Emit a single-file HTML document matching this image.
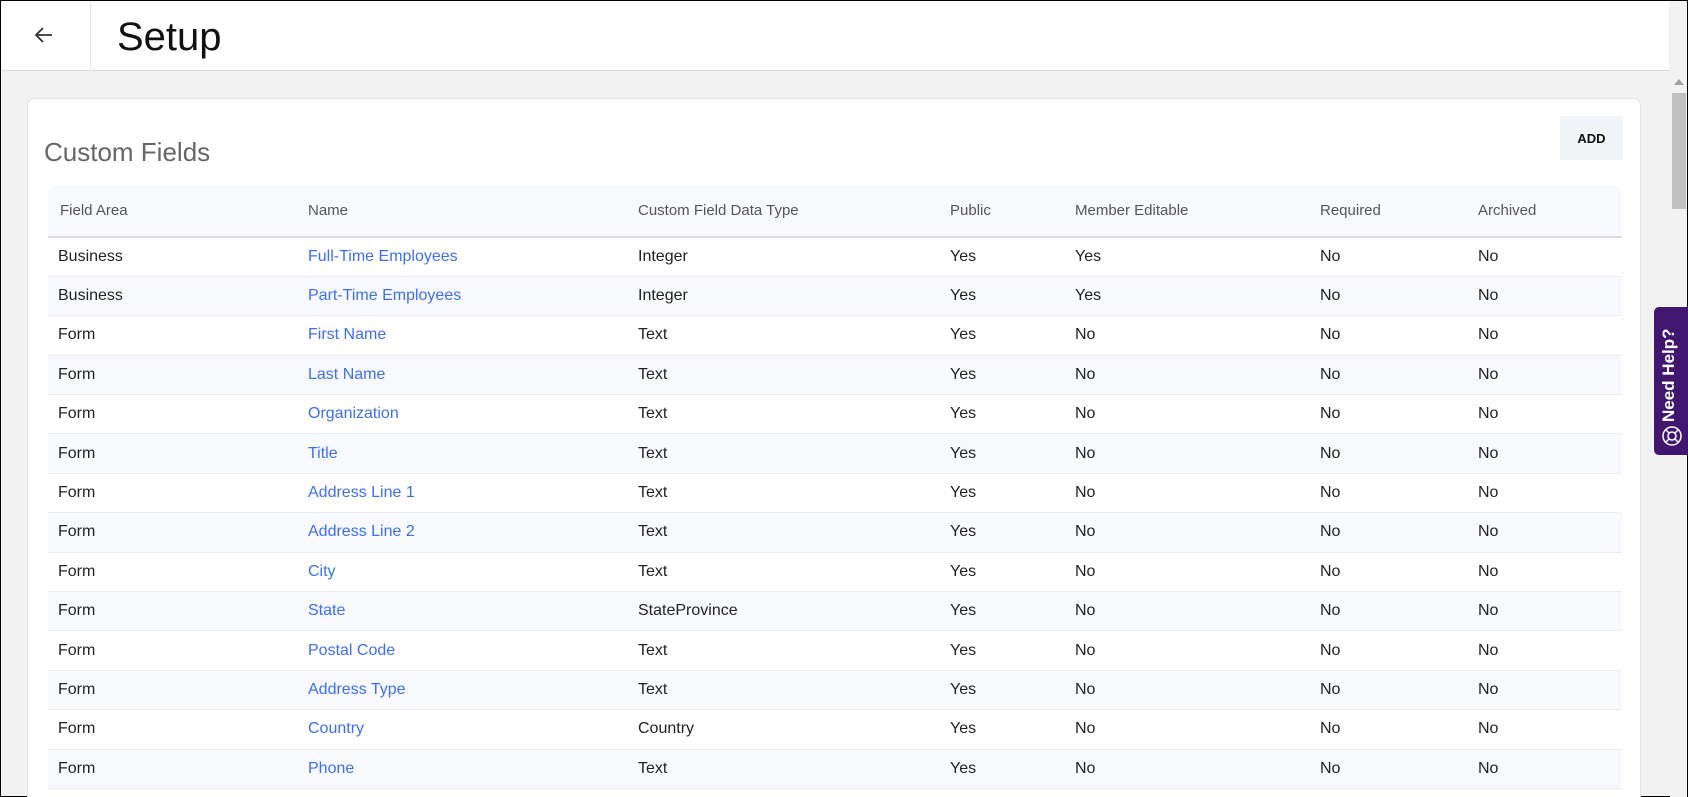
<!DOCTYPE html>
<html><head><meta charset="utf-8"><style>
*{box-sizing:border-box;margin:0;padding:0}
html,body{width:1688px;height:797px;overflow:hidden}
body{background:#f2f2f2;font-family:"Liberation Sans",sans-serif;color:#222;position:relative;border:1px solid #000}
.hdr{position:absolute;left:0;top:0;width:1668px;height:70px;background:#fff;border-bottom:1px solid #d6d6d6}
.div{position:absolute;left:89px;top:0;width:1px;height:70px;background:#e8e8e8}
.title{position:absolute;left:116px;top:14px;font-size:40px;color:#111}
.card{position:absolute;left:26px;top:97px;width:1614px;height:720px;background:#fff;border:1px solid #e4e4e4;border-radius:8px}
.cf{position:absolute;left:16px;top:38px;font-size:26px;color:#666}
.add{position:absolute;left:1532px;top:17px;width:63px;height:44px;background:#f2f5f8;font-weight:bold;font-size:13px;display:flex;align-items:center;justify-content:center;color:#111}
table{position:absolute;left:20px;top:86px;width:1574px;border-collapse:collapse;font-size:16px}
thead tr{background:#f7f9fc;height:52px}
th{font-weight:normal;text-align:left;color:#555;font-size:15px;border-bottom:2px solid #dedede}
td{height:39.4px;border-bottom:1px solid #ececec}
tbody tr:nth-child(even){background:#f7f9fc}
th:first-child{border-top-left-radius:8px}
th:last-child{border-top-right-radius:8px}
a{color:#3f6ff0;text-decoration:none}
.sb{position:absolute;left:1669px;top:71px;width:17px;height:726px;background:#f2f2f2}
.thumb{position:absolute;left:1671px;top:92px;width:14px;height:116px;background:#c1c1c1}
.help{position:absolute;left:1653px;top:306px;width:35px;height:148px;background:#40166e;border-radius:5px 0 0 5px}
.help span{position:absolute;left:-40px;top:50px;transform:rotate(-90deg);color:#fff;font-weight:bold;font-size:17px;width:110px;white-space:nowrap}
</style></head><body>
<div class="hdr">
<svg style="position:absolute;left:33px;top:25px" width="20" height="18" viewBox="0 0 20 18"><path d="M18 9H3M9 2L2 9l7 7" fill="none" stroke="#333" stroke-width="1.8"/></svg>
<div class="div"></div>
<div class="title">Setup</div>
</div>
<div class="card">
<div class="cf">Custom Fields</div>
<div class="add">ADD</div>
<table>
<colgroup><col style="width:260px"><col style="width:330px"><col style="width:312px"><col style="width:125px"><col style="width:245px"><col style="width:158px"><col></colgroup>
<thead><tr><th style="padding-left:12px">Field Area</th><th>Name</th><th>Custom Field Data Type</th><th>Public</th><th>Member Editable</th><th>Required</th><th>Archived</th></tr></thead>
<tbody>
<tr><td style="padding-left:10px">Business</td><td><a>Full-Time Employees</a></td><td>Integer</td><td>Yes</td><td>Yes</td><td>No</td><td>No</td></tr>
<tr><td style="padding-left:10px">Business</td><td><a>Part-Time Employees</a></td><td>Integer</td><td>Yes</td><td>Yes</td><td>No</td><td>No</td></tr>
<tr><td style="padding-left:10px">Form</td><td><a>First Name</a></td><td>Text</td><td>Yes</td><td>No</td><td>No</td><td>No</td></tr>
<tr><td style="padding-left:10px">Form</td><td><a>Last Name</a></td><td>Text</td><td>Yes</td><td>No</td><td>No</td><td>No</td></tr>
<tr><td style="padding-left:10px">Form</td><td><a>Organization</a></td><td>Text</td><td>Yes</td><td>No</td><td>No</td><td>No</td></tr>
<tr><td style="padding-left:10px">Form</td><td><a>Title</a></td><td>Text</td><td>Yes</td><td>No</td><td>No</td><td>No</td></tr>
<tr><td style="padding-left:10px">Form</td><td><a>Address Line 1</a></td><td>Text</td><td>Yes</td><td>No</td><td>No</td><td>No</td></tr>
<tr><td style="padding-left:10px">Form</td><td><a>Address Line 2</a></td><td>Text</td><td>Yes</td><td>No</td><td>No</td><td>No</td></tr>
<tr><td style="padding-left:10px">Form</td><td><a>City</a></td><td>Text</td><td>Yes</td><td>No</td><td>No</td><td>No</td></tr>
<tr><td style="padding-left:10px">Form</td><td><a>State</a></td><td>StateProvince</td><td>Yes</td><td>No</td><td>No</td><td>No</td></tr>
<tr><td style="padding-left:10px">Form</td><td><a>Postal Code</a></td><td>Text</td><td>Yes</td><td>No</td><td>No</td><td>No</td></tr>
<tr><td style="padding-left:10px">Form</td><td><a>Address Type</a></td><td>Text</td><td>Yes</td><td>No</td><td>No</td><td>No</td></tr>
<tr><td style="padding-left:10px">Form</td><td><a>Country</a></td><td>Country</td><td>Yes</td><td>No</td><td>No</td><td>No</td></tr>
<tr><td style="padding-left:10px">Form</td><td><a>Phone</a></td><td>Text</td><td>Yes</td><td>No</td><td>No</td><td>No</td></tr>
<tr><td style="padding-left:10px">Form</td><td><a>Email</a></td><td>Text</td><td>Yes</td><td>No</td><td>No</td><td>No</td></tr>
</tbody></table>
</div>
<div class="sb"></div>
<svg style="position:absolute;left:1673px;top:78px" width="10" height="6"><path d="M0 6L5 0L10 6Z" fill="#a3a3a3"/></svg>
<div class="thumb"></div>
<div class="help"><span>Need Help?</span>
<svg style="position:absolute;left:7px;top:118px" width="22" height="22" viewBox="0 0 22 22"><g fill="none" stroke="#fff" stroke-width="1.5"><circle cx="11" cy="11" r="9"/><circle cx="11" cy="11" r="4"/><path d="M5 5l3 3M17 5l-3 3M5 17l3-3M17 17l-3-3"/></g></svg>
</div>
</body></html>
